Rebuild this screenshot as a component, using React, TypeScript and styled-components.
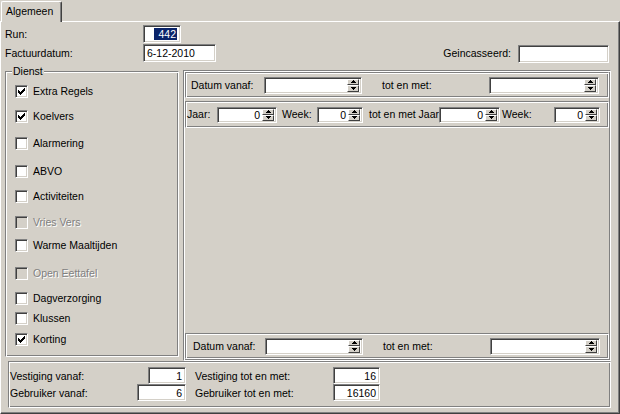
import React from "react";
import styled, { createGlobalStyle, css } from "styled-components";

const Global = createGlobalStyle`
  html, body { margin: 0; padding: 0; background: #D4D0C8; }
  body {
    font-family: "Liberation Sans", Arial, sans-serif;
    font-size: 10.5px;
    color: #000;
  }
  * { box-sizing: border-box; }
`;

const etched = css`
  border: 1px solid;
  border-color: #808080 #fff #fff #808080;
  box-shadow: inset 1px 1px #fff, inset -1px -1px #808080;
`;

const sunken = css`
  border: 1px solid;
  border-color: #808080 #fff #fff #808080;
  box-shadow: inset 1px 1px #404040, inset -1px -1px #D4D0C8;
`;

const Window = styled.div`
  width: 620px;
  height: 414px;
  background: #D4D0C8;
  display: flex;
  flex-direction: column;
  overflow: hidden;
`;

const TabStrip = styled.div`
  height: 21px;
  display: flex;
  align-items: flex-end;
  padding-left: 1px;
  position: relative;
  z-index: 1;
`;

const Tab = styled.div`
  height: 21px;
  width: 61px;
  margin-bottom: -1px;
  background: #D4D0C8;
  border-top: 1px solid #fff;
  border-left: 1px solid #fff;
  border-right: 1px solid #404040;
  box-shadow: inset -1px 0 #808080;
  border-top-left-radius: 2px;
  border-top-right-radius: 2px;
  padding: 3px 0 0 4px;
  line-height: 13px;
`;

const TabPanel = styled.div`
  flex: 1;
  border-top: 1px solid #fff;
  border-left: 1px solid #fff;
  border-right: 1px solid #404040;
  border-bottom: 1px solid #404040;
  box-shadow: inset -1px -1px #808080;
  display: flex;
  flex-direction: column;
`;

const Header = styled.div`
  height: 48px;
  padding: 3px 10px 0 4px;
  display: flex;
  flex-direction: column;
  gap: 1px;
`;

const FieldRow = styled.div`
  display: flex;
  align-items: flex-start;
  height: 18px;
`;

const Label = styled.span<{ $w?: number; $ml?: number; $mr?: number }>`
  ${(p) => (p.$w ? `width: ${p.$w}px;` : "")}
  margin-left: ${(p) => p.$ml ?? 0}px;
  margin-right: ${(p) => p.$mr ?? 0}px;
  flex-shrink: 0;
  white-space: nowrap;
  line-height: 13px;
  align-self: center;
`;

const Spacer = styled.div`
  flex: 1;
`;

const Field = styled.div<{ $w: number; $h?: number; $right?: boolean; $mt?: number }>`
  ${sunken}
  width: ${(p) => p.$w}px;
  height: ${(p) => p.$h ?? 18}px;
  margin-top: ${(p) => p.$mt ?? 0}px;
  background: #fff;
  flex-shrink: 0;
  display: flex;
  align-items: center;
  justify-content: ${(p) => (p.$right ? "flex-end" : "flex-start")};
  padding: 0 3px;
  line-height: 12px;
  overflow: hidden;
  white-space: nowrap;
`;

const Selected = styled.span`
  background: #0A246A;
  color: #fff;
  padding: 0 1px 0 4px;
  line-height: 12px;
`;

const Middle = styled.div`
  display: flex;
  align-items: flex-start;
  gap: 4px;
  padding-left: 4px;
  height: 291px;
`;

const GroupBox = styled.div`
  ${etched}
  position: relative;
  width: 174px;
  height: 286px;
  margin-top: 1px;
  padding-left: 9px;
  display: flex;
  flex-direction: column;
`;

const Caption = styled.span`
  position: absolute;
  top: -7px;
  left: 6px;
  padding: 0 1px;
  background: #D4D0C8;
  line-height: 13px;
`;

const CheckRow = styled.div<{ $mt: number; $disabled?: boolean }>`
  display: flex;
  align-items: center;
  gap: 5px;
  height: 14px;
  margin-top: ${(p) => p.$mt}px;
  line-height: 13px;
  white-space: nowrap;
  color: ${(p) => (p.$disabled ? "#808080" : "#000")};
  text-shadow: ${(p) => (p.$disabled ? "1px 1px #fff" : "none")};
`;

const Box = styled.span<{ $disabled?: boolean }>`
  ${sunken}
  width: 13px;
  height: 13px;
  background: ${(p) => (p.$disabled ? "#D4D0C8" : "#fff")};
  display: flex;
  align-items: center;
  justify-content: center;
  flex-shrink: 0;
`;

const RightBox = styled.div`
  ${etched}
  width: 428px;
  height: 291px;
  padding: 1px;
  display: flex;
  flex-direction: column;
`;

const Panel = styled.div<{ $pl?: number; $mt?: number; $auto?: boolean }>`
  ${etched}
  height: 26px;
  margin-top: ${(p) => (p.$auto ? "auto" : `${p.$mt ?? 0}px`)};
  padding-left: ${(p) => p.$pl ?? 0}px;
  display: flex;
  align-items: center;
`;

const JaarPanel = styled(Panel)`
  height: 27px;
  padding-left: 1px;
`;

const SpinField = styled(Field)`
  padding: 0 2px 0 3px;
`;

const SpinValue = styled.span`
  flex: 1;
  text-align: right;
  padding-right: 2px;
`;

const SpinCol = styled.div`
  width: 12px;
  height: 100%;
  display: flex;
  flex-direction: column;
  padding: 1px 0;
`;

const SpinBtn = styled.div`
  flex: 1;
  background: #D4D0C8;
  border: 1px solid;
  border-color: #fff #404040 #404040 #fff;
  display: flex;
  align-items: center;
  justify-content: center;
`;

const BottomPanel = styled.div`
  ${etched}
  margin-left: 7px;
  width: 603px;
  height: 47px;
  padding: 5px 0 0 1px;
  display: grid;
  grid-template-columns: 176px 185px;
  grid-auto-rows: 17px;
  column-gap: 9px;
`;

const Cell = styled.div`
  display: flex;
  align-items: center;
  justify-content: space-between;
`;

const Check = () => (
  <svg width="7" height="7" viewBox="0 0 7 7" shapeRendering="crispEdges">
    <path
      fill="#000"
      d="M6 0h1v1H6zM5 1h2v1H5zM0 2h1v1H0zM4 2h3v1H4zM0 3h2v1H0zM3 3h3v1H3zM0 4h5v1H0zM1 5h3v1H1zM2 6h1v1H2z"
    />
  </svg>
);

const Up = () => (
  <svg width="5" height="3" viewBox="0 0 5 3" shapeRendering="crispEdges">
    <path fill="#000" d="M2 0h1v1h1v1h1v1H0V2h1V1h1z" />
  </svg>
);

const Down = () => (
  <svg width="5" height="3" viewBox="0 0 5 3" shapeRendering="crispEdges">
    <path fill="#000" d="M0 0h5v1H4v1H3v1H2V2H1V1H0z" />
  </svg>
);

const Spin = ({ w, h, value }: { w: number; h: number; value?: string }) => (
  <SpinField $w={w} $h={h}>
    <SpinValue>{value ?? ""}</SpinValue>
    <SpinCol>
      <SpinBtn>
        <Up />
      </SpinBtn>
      <SpinBtn>
        <Down />
      </SpinBtn>
    </SpinCol>
  </SpinField>
);

const checks = [
  { label: "Extra Regels", checked: true, mt: 12 },
  { label: "Koelvers", checked: true, mt: 11 },
  { label: "Alarmering", mt: 13 },
  { label: "ABVO", mt: 14 },
  { label: "Activiteiten", mt: 11 },
  { label: "Vries Vers", disabled: true, mt: 12 },
  { label: "Warme Maaltijden", mt: 9 },
  { label: "Open Eettafel", disabled: true, mt: 14 },
  { label: "Dagverzorging", mt: 11 },
  { label: "Klussen", mt: 6 },
  { label: "Korting", checked: true, mt: 7 },
] as { label: string; checked?: boolean; disabled?: boolean; mt: number }[];

const DatumRow = ({ pl, lw }: { pl: number; lw: number }) => (
  <>
    <Label $w={lw}>Datum vanaf:</Label>
    <Spin w={98} h={17} />
    <Label $w={107} $ml={20}>
      tot en met:
    </Label>
    <Spin w={110} h={17} />
  </>
);

export default function App() {
  return (
    <>
      <Global />
      <Window>
        <TabStrip>
          <Tab>Algemeen</Tab>
        </TabStrip>
        <TabPanel>
          <Header>
            <FieldRow>
              <Label $w={138}>Run:</Label>
              <Field $w={38} $right>
                <Selected>442</Selected>
              </Field>
            </FieldRow>
            <FieldRow>
              <Label $w={138}>Factuurdatum:</Label>
              <Field $w={73}>6-12-2010</Field>
              <Spacer />
              <Label $mr={7}>Geincasseerd:</Label>
              <Field $w={91} $mt={1} />
            </FieldRow>
          </Header>
          <Middle>
            <GroupBox>
              <Caption>Dienst</Caption>
              {checks.map((c) => (
                <CheckRow key={c.label} $mt={c.mt} $disabled={c.disabled}>
                  <Box $disabled={c.disabled}>{c.checked && <Check />}</Box>
                  {c.label}
                </CheckRow>
              ))}
            </GroupBox>
            <RightBox>
              <Panel $pl={5}>
                <DatumRow pl={5} lw={73} />
              </Panel>
              <JaarPanel $mt={3}>
                <Label $w={30}>Jaar:</Label>
                <Spin w={60} h={16} value="0" />
                <Label $w={35} $ml={5}>
                  Week:
                </Label>
                <Spin w={46} h={16} value="0" />
                <Label $w={70} $ml={6}>
                  tot en met Jaar
                </Label>
                <Spin w={61} h={16} value="0" />
                <Label $w={52} $ml={2}>
                  Week:
                </Label>
                <Spin w={46} h={16} value="0" />
              </JaarPanel>
              <Panel $pl={7} $auto>
                <DatumRow pl={7} lw={72} />
              </Panel>
            </RightBox>
          </Middle>
          <BottomPanel>
            <Cell>
              <span>Vestiging vanaf:</span>
              <Field $w={38} $h={17} $right>
                1
              </Field>
            </Cell>
            <Cell>
              <span>Vestiging tot en met:</span>
              <Field $w={47} $h={17} $right>
                16
              </Field>
            </Cell>
            <Cell>
              <span>Gebruiker vanaf:</span>
              <Field $w={49} $h={17} $right>
                6
              </Field>
            </Cell>
            <Cell>
              <span>Gebruiker tot en met:</span>
              <Field $w={47} $h={17} $right>
                16160
              </Field>
            </Cell>
          </BottomPanel>
        </TabPanel>
      </Window>
    </>
  );
}
